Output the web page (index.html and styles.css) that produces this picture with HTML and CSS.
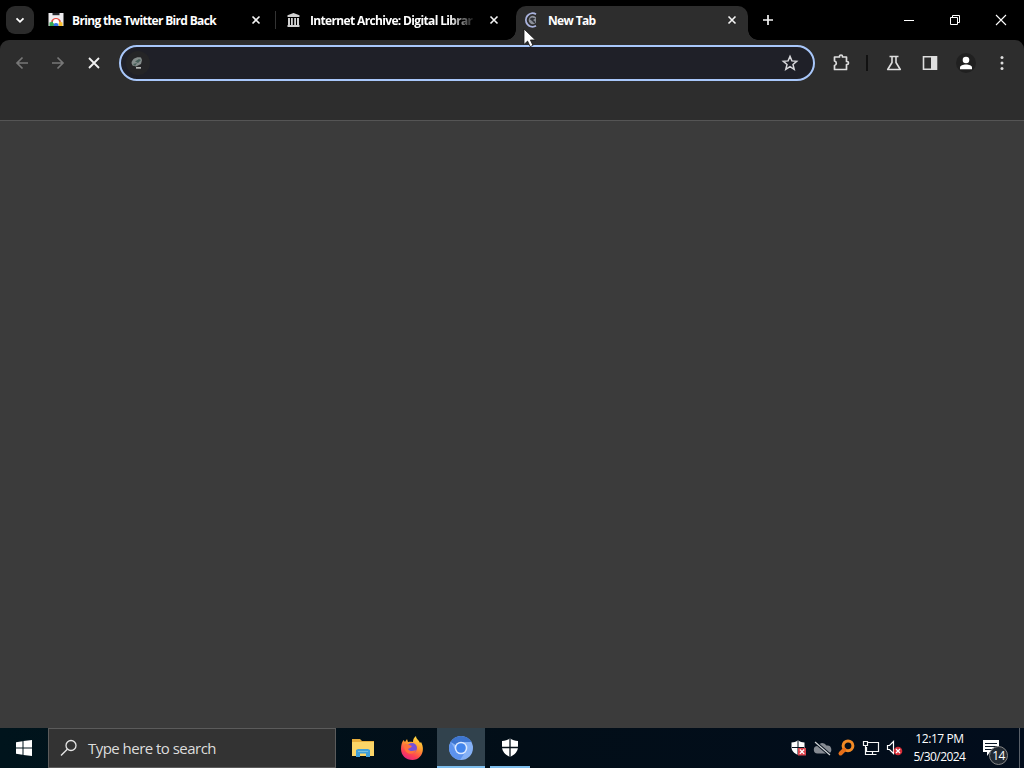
FILE: index.html
```html
<!DOCTYPE html>
<html lang="en">
<head>
<meta charset="utf-8">
<title>New Tab</title>
<link rel="stylesheet" href="styles.css">
</head>
<body>
<div class="desktop">
  <header class="tabstrip">
    <button class="tab-search" aria-label="Search tabs"><svg width="28" height="28" viewBox="0 0 28 28"><path d="M10.500 12.300 14 15.800l3.500-3.500" fill="none" stroke="#fff" stroke-width="1.800"/></svg></button>
    <div class="tab">
      <svg class="favicon" width="16" height="16" viewBox="0 0 16 16"><path d="M.5 1h15v13H.5z" fill="#eeecef"/><path d="M4.500 1h7v2.200h-7z" fill="#24272b"/><path d="M3 9.500a5.300 5.300 0 0 1 10 0l-2 1H5z" fill="#e6443b"/><path d="M1.500 10.500 5 9.500 6.500 14h-5z" fill="#35a853"/><path d="M11 9.500l3.500 1V14h-4z" fill="#fbc02d"/><path d="M5 10a3 3 0 0 1 6 0v1H5z" fill="#fff"/><path d="M5.500 14a2.500 3 0 0 1 5 0z" fill="#3475e8"/></svg>
      <span class="tab-title t1">Bring the Twitter Bird Back</span>
      <svg class="close" width="16" height="16" viewBox="0 0 16 16"><path d="M4.500 4.500l7 7m0-7-7 7" stroke="#f4f4f4" stroke-width="1.600"/></svg>
    </div>
    <i class="tab-divider"></i>
    <div class="tab second">
      <svg class="favicon" width="16" height="16" viewBox="0 0 16 16"><path d="M1.500 3.300 7.500 1l6 2.300V5h-12zM2 6h2v7H2zM5 6h1.800v7H5zM8.200 6H10v7H8.200zM11 6h2v7h-2zM1.500 13h12v2h-12z" fill="#d0d0d0"/></svg>
      <span class="tab-title t2">Internet Archive: Digital Librar</span>
      <svg class="close" width="16" height="16" viewBox="0 0 16 16"><path d="M4.500 4.500l7 7m0-7-7 7" stroke="#f4f4f4" stroke-width="1.600"/></svg>
    </div>
    <div class="tab active">
      <svg class="favicon" width="16" height="16" viewBox="0 0 16 16"><path d="M12 2.200A6.700 6.700 0 1 0 12 13.800" fill="none" stroke="#aab3de" stroke-width="1.900"/><path d="M12 5.200A4.200 4.200 0 1 0 12 10.800z" fill="#8b8f99"/><path d="M5.500 7 8 5.500l3.500 1L9 8l2.500 2-1 1.500L8 9z" fill="#30333a"/></svg>
      <span class="tab-title t3">New Tab</span>
      <svg class="close" width="16" height="16" viewBox="0 0 16 16"><path d="M4.500 4.500l7 7m0-7-7 7" stroke="#f4f4f4" stroke-width="1.600"/></svg>
    </div>
    <svg class="new-tab" width="28" height="28" viewBox="0 0 28 28"><path d="M14 9v10M9 14h10" stroke="#f4f4f4" stroke-width="1.700"/></svg>
    <div class="window-controls">
      <svg width="46" height="40" viewBox="0 0 46 40"><path d="M18 20.500h10" stroke="#fff"/></svg>
      <svg width="46" height="40" viewBox="0 0 46 40"><path d="M18.500 17.500h7v7h-7zM20.500 17v-1.500h7v7H26" fill="none" stroke="#fff"/></svg>
      <svg width="46" height="40" viewBox="0 0 46 40"><path d="M18 15l10 10m0-10-10 10" stroke="#fff" stroke-width="1.100"/></svg>
    </div>
  </header>

  <div class="toolbar">
    <div class="nav">
      <svg width="36" height="36" viewBox="0 0 36 36"><path d="M24 18H13m5.500-5.500L13 18l5.500 5.500" fill="none" stroke="#777" stroke-width="1.700"/></svg>
      <svg width="36" height="36" viewBox="0 0 36 36"><path d="M12 18h11m-5.500-5.500L23 18l-5.500 5.500" fill="none" stroke="#777" stroke-width="1.700"/></svg>
      <svg width="36" height="36" viewBox="0 0 36 36"><path d="M13 13l10 10m0-10L13 23" stroke="#f2f2f2" stroke-width="1.800"/></svg>
    </div>
    <div class="omnibox">
      <span class="site-icon"><svg width="16" height="16" viewBox="0 0 16 16"><path d="M1.500 8C2 4 6 1.500 11 2.500l1 2.500-1 4-5 2.500-3.500-1z" fill="#848c8b"/><path d="M5 6.500l4-2.500 2 1-3 3zM3 9l4-1-2 3z" fill="#455e59"/><path d="M6 12h5v1.700H6z" fill="#b5b8b7"/></svg></span>
      <svg class="star" width="20" height="20" viewBox="0 0 20 20"><path d="M10 3.400l1.900 4.500 4.800.4-3.700 3.200 1.200 4.800L10 13.700l-4.200 2.600L7 11.500 3.300 8.300l4.800-.4z" fill="none" stroke="#d8d8dc" stroke-width="1.500"/></svg>
    </div>
    <div class="actions">
      <svg class="puzzle" width="20" height="20" viewBox="0 0 20 20"><path d="M3.500 4h5v-.5a1.500 1.500 0 0 1 3 0V4H15.500V8.500h.5a1.500 1.500 0 0 1 0 3h-.5v5h-12v-4a2.300 2.300 0 0 0 0-4.500z" fill="none" stroke="#dedede" stroke-width="1.700" stroke-linejoin="round"/></svg>
      <i class="divider"></i>
      <svg class="flask" width="20" height="20" viewBox="0 0 20 20"><path d="M5.500 3.500h9M8 4v5.500L3.700 16.500h12.600L12 9.500V4" fill="none" stroke="#dedede" stroke-width="1.600" stroke-linejoin="round"/></svg>
      <svg width="20" height="20" viewBox="0 0 20 20"><path d="M3.500 3.800h13v12.400h-13z" fill="none" stroke="#dedede" stroke-width="1.600"/><path d="M11 4h6v12h-6z" fill="#dedede"/></svg>
      <span class="avatar"><svg width="20" height="20" viewBox="0 0 20 20"><circle cx="10" cy="7" r="3.300" fill="#fff"/><path d="M4 16.200v-1.700c0-2 3-3 6-3s6 1 6 3v1.700z" fill="#fff"/></svg></span>
      <svg width="20" height="20" viewBox="0 0 20 20" fill="#dedede"><circle cx="10" cy="4.500" r="1.500"/><circle cx="10" cy="10" r="1.500"/><circle cx="10" cy="15.500" r="1.500"/></svg>
    </div>
  </div>
  <div class="bookmarks"></div>
  <main class="page"></main>

  <footer class="taskbar">
    <div class="start"><svg width="48" height="40" viewBox="0 0 48 40"><path d="M16 14.200l6.500-.9V19.500H16zM23.500 13.100 32 12v7.500h-8.500zM16 20.500h6.500v6.200L16 25.800zM23.500 20.500H32V28l-8.500-1.100z" fill="#fff"/></svg></div>
    <div class="search"><svg width="18" height="18" viewBox="0 0 18 18"><circle cx="11" cy="6.500" r="5" fill="none" stroke="#e5e5e5" stroke-width="1.300"/><path d="M7.300 10.200 1 16.500" stroke="#e5e5e5" stroke-width="1.400"/></svg><span class="search-text">Type here to search</span></div>
    <div class="apps">
      <div class="app"><svg width="26" height="26" viewBox="0 0 26 26"><path d="M2 4h8l2 2h12v15H2z" fill="#e8ae3c"/><path d="M2 7h22v14H2z" fill="#fbd568"/><path d="M6 22v-7l2-1h10l2 1v7h-4v-3.500h-6V22z" fill="#3f9fd9"/><path d="M8 16h10v1H8z" fill="#78c0df"/></svg></div>
      <div class="app"><svg width="26" height="26" viewBox="0 0 26 26"><defs><linearGradient id="fox" x1=".8" y1="0" x2=".3" y2="1"><stop offset="0" stop-color="#ffe545"/><stop offset=".42" stop-color="#ff9a2e"/><stop offset=".75" stop-color="#ff4251"/><stop offset="1" stop-color="#e52580"/></linearGradient></defs><path d="M2 14c0-4 1-7 2.500-9L6 7l2-3 1 3c2-.5 3-.5 5 0 0-3 1-4.500 3-6 0 3 3 4 4 7l1-1c5 9-.5 18-8.500 18C7 25 2 20.500 2 14z" fill="url(#fox)"/><circle cx="13" cy="13" r="5" fill="#7650d8"/><path d="M6 9c3 0 4 1 7 2-1 2-3 2-4 3 2 3 5 2 8 1-2 5-9 5-11 0-1-2-1-4 0-6z" fill="#ff713b"/></svg></div>
      <div class="app current"><svg width="26" height="26" viewBox="0 0 26 26"><circle cx="13" cy="13" r="12" fill="#85b1f6"/><path d="M13 13 2.600 7A12 12 0 0 1 23.400 7H13z" fill="#3d75cf"/><path d="M2.600 7A12 12 0 0 0 12 25l6-9-9 1z" fill="#5c92ed"/><circle cx="13" cy="13" r="6.300" fill="#dce9ff"/><circle cx="13" cy="13" r="4.800" fill="#4285ed"/></svg></div>
      <div class="app running"><svg width="26" height="26" viewBox="0 0 26 26"><path d="M13 3.500c2.500 1.700 5 2.400 8 2.600V11.500c0 5-3 8-8 10.500C8 19.500 5 16.500 5 11.500V6.100C8 5.900 10.500 5.200 13 3.500z" fill="#fff"/><path d="M13 3.500V22M5 12.500h16" stroke="#07121b" stroke-width="1.300"/></svg></div>
    </div>
    <div class="tray">
      <svg width="24" height="24" viewBox="0 0 24 24"><path d="M11 4.500c2 1.300 4 2 6.500 2v4.500c0 4-2.500 6-6.500 8-4-2-6.500-4-6.500-8V6.500C7 6.500 9 5.800 11 4.500z" fill="#fff"/><path d="M11 5v14M5 11.500h12" stroke="#05101c"/><path d="M11 12h8v7.500h-8z" fill="#d9434c"/><path d="M12.800 13.500l4.400 4.400m0-4.400-4.400 4.400" stroke="#fff" stroke-width="1.300"/></svg>
      <svg width="24" height="24" viewBox="0 0 24 24"><path d="M6.500 17.500a3.700 3.700 0 0 1 0-7.400 5 5 0 0 1 9-.6 4 4 0 0 1 1.500 8z" fill="#858a92"/><path d="M4 6l15 13" stroke="#05101c" stroke-width="3"/><path d="M4 6l15 13" stroke="#d2d5d8" stroke-width="1.200"/></svg>
      <svg width="24" height="24" viewBox="0 0 24 24"><circle cx="13" cy="9.800" r="4.900" fill="none" stroke="#f28a25" stroke-width="3"/><path d="M9.500 13.500 5.500 17.500" stroke="#e66f19" stroke-width="4" stroke-linecap="round"/></svg>
      <svg width="24" height="24" viewBox="0 0 24 24" fill="none" stroke="#f5f5f5" stroke-width="1.200"><path d="M9 6.500h10.500v9h-12V11M13.500 16v2.500M9.500 18.500h8M4.500 5.500h4v4h-4zM6.500 9.500v9h3"/></svg>
      <svg width="24" height="24" viewBox="0 0 24 24"><path d="M4.500 9.500h2l4-4v12l-4-4h-2z" fill="none" stroke="#fff" stroke-width="1.200"/><circle cx="15" cy="15" r="4.300" fill="#d72d37"/><path d="M13 13l4 4m0-4-4 4" stroke="#fff" stroke-width="1.300"/></svg>
    </div>
    <div class="clock"><span class="time">12:17 PM</span><span class="date">5/30/2024</span></div>
    <div class="notifications"><svg width="18" height="18" viewBox="0 0 18 18"><path d="M1 1h16v12H8l-3 4v-4H1z" fill="#fff"/><path d="M3 4.500h12M3 7.500h12M3 10.500h12" stroke="#0a1726"/></svg><span class="badge">14</span></div>
    <i class="show-desktop"></i>
  </footer>
  <svg class="cursor" width="14" height="20" viewBox="0 0 14 20"><path d="M1 1v15.500l3.600-3.400 2.500 5.500 2.800-1.200-2.500-5.400h5z" fill="#fff" stroke="#171717" stroke-width=".8"/></svg>
</div>
</body>
</html>
```
FILE: styles.css
```css
* { box-sizing: border-box; }
body { margin: 0; background: #3b3b3b; font-family: "Open Sans", "Noto Sans", sans-serif; color: #fff; }
svg { display: block; flex-shrink: 0; }
.desktop { position: relative; width: 1024px; height: 768px; display: flex; flex-direction: column; overflow: hidden; background: #000; }
.tabstrip { display: flex; height: 40px; align-items: center; flex-shrink: 0; padding-left: 6px; background: #000; }
.tab-search { width: 28px; height: 28px; padding: 0; border: 0; border-radius: 9px; background: #2b2b2b; flex-shrink: 0; }
.tab { width: 234px; height: 34px; margin-left: 6px; padding: 0 10px 0 8px; display: flex; align-items: center; flex-shrink: 0; }
.second { width: 240px; margin-left: 0; padding: 0 14px 0 10px; }
.tab-divider { width: 1px; height: 18px; margin-left: 1px; background: #333; }
.tab-title { flex: 1; min-width: 0; margin-left: 8px; padding-top: 2px; white-space: nowrap; font-size: 12px; line-height: 18px; font-weight: 700; letter-spacing: -.67px; }
.t2 { max-width: 166px; letter-spacing: -.65px; mask-image: linear-gradient(90deg, #000 84%, transparent); }
.t3 { letter-spacing: -.65px; }
.close { margin-left: auto; }
.active { position: relative; align-self: flex-end; width: 232px; margin-left: 0; padding: 0 8px 6px; border-radius: 10px 10px 0 0; background: #2d2d2d; }
.active::before, .active::after { content: ""; position: absolute; bottom: 0; width: 10px; height: 10px; }
.active::before { right: 100%; background: radial-gradient(circle at 0 0, transparent 9.500px, #2d2d2d 10px); }
.active::after { left: 100%; background: radial-gradient(circle at 100% 0, transparent 9.500px, #2d2d2d 10px); }
.new-tab { margin-left: 6px; }
.window-controls { display: flex; margin-left: auto; }
.toolbar { height: 46px; flex-shrink: 0; display: flex; align-items: center; padding-left: 4px; border-radius: 9px 9px 0 0; background: #2d2d2d; }
.nav { display: flex; width: 115px; }
.omnibox { width: 696px; height: 36px; display: flex; align-items: center; justify-content: space-between; padding: 0 13px 0 5px; border: 2px solid #a8c7fa; border-radius: 18px; background: #1f2028; }
.site-icon { width: 24px; height: 24px; display: grid; place-items: center; border-radius: 12px; background: #252527; }
.actions { display: flex; flex: 1; align-items: center; gap: 16px; padding-left: 16px; }
.divider { width: 2px; height: 16px; margin-left: -1px; background: #111; }
.avatar { width: 20px; height: 20px; border-radius: 50%; background: #202020; }
.bookmarks { height: 35px; flex-shrink: 0; background: #2d2d2d; border-bottom: 1px solid #555; }
.page { flex: 1; background: #3b3b3b; }
.taskbar { height: 40px; flex-shrink: 0; display: flex; background: linear-gradient(90deg, #00141c, #020e18 50%, #020d1c); }
.start { width: 48px; }
.search { width: 288px; display: flex; align-items: center; gap: 10px; padding-left: 11px; background: #333; border: 1px solid #5b5b5b; color: #ddd; }
.search-text { font: 15px/20px "Open Sans", sans-serif; letter-spacing: -.53px; white-space: nowrap; }
.apps { display: flex; padding-left: 3px; gap: 1px; }
.app { width: 48px; display: grid; place-items: center; }
.current { background: #31424d; border-bottom: 2px solid #7ebeed; padding-top: 2px; }
.running { background: linear-gradient(#7ebeed, #7ebeed) center bottom / 40px 2px no-repeat; }
.tray { display: flex; align-items: center; margin-left: auto; }
.clock { width: 65px; display: flex; flex-direction: column; align-items: center; justify-content: center; font-size: 12px; line-height: 18px; white-space: nowrap; }
.time { letter-spacing: -.4px; }
.date { letter-spacing: -.55px; }
.notifications { position: relative; width: 47px; padding: 11px 0 0 10px; }
.badge { position: absolute; left: 17px; top: 18px; width: 19px; height: 19px; border: 1px solid #858585; border-radius: 50%; background: #222a33; text-align: center; font-size: 12px; line-height: 17px; letter-spacing: -.7px; }
.show-desktop { width: 5px; border-left: 1px solid #5a6069; }
.cursor { position: absolute; left: 523px; top: 28px; }
```
